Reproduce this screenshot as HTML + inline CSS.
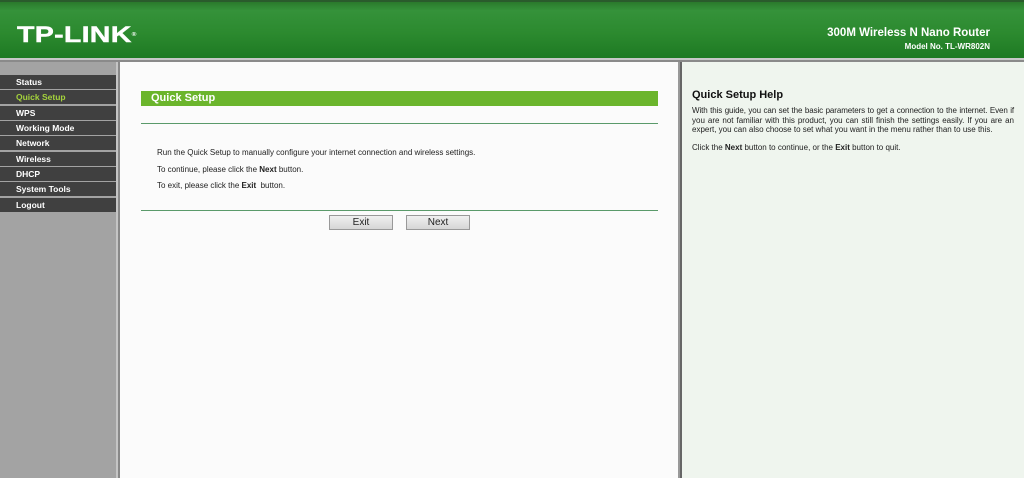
<!DOCTYPE html>
<html><head><style>
*{margin:0;padding:0;box-sizing:border-box}
body{width:1024px;height:478px;overflow:hidden;font-family:"Liberation Sans",Arial,sans-serif;background:#fff;position:relative}
#hd{position:absolute;left:0;top:0;width:1024px;height:58px;background:linear-gradient(#2a7a2c 0,#35923a 15%,#2c8a2f 55%,#1e7a23 100%);border-top:2px solid #2a5b2c}
#logo{position:absolute;left:17px;top:22px;color:#fff;font-weight:bold;font-size:22px;letter-spacing:0.2px;transform:scaleX(1.3);transform-origin:left;line-height:22px;white-space:nowrap;-webkit-text-stroke:0.4px #fff}
#logo sup{font-size:5px;vertical-align:top;-webkit-text-stroke:0}
#t1{position:absolute;right:34px;top:25px;color:#fff;font-weight:bold;font-size:11.5px}
#t2{position:absolute;right:34px;top:40px;color:#fff;font-weight:bold;font-size:8px}
#strip{position:absolute;left:0;top:58px;width:1024px;height:4px;background:linear-gradient(#c8c8c8 0,#c8c8c8 50%,#8a8a8a 50%)}
#side{position:absolute;left:0;top:62px;width:116px;height:416px;background:#a3a3a3}
#sdiv{position:absolute;left:116px;top:62px;width:4px;height:416px;background:linear-gradient(90deg,#c5c5c5 0,#c5c5c5 50%,#888 50%)}
.m{position:absolute;left:0;width:116px;height:14px;background:#404040;color:#fff;font-weight:bold;font-size:8.5px;line-height:14px;padding-left:16px}
#main{position:absolute;left:120px;top:62px;width:558px;height:416px;background:#fbfbfb}
#rdiv{position:absolute;left:678px;top:62px;width:4px;height:416px;background:linear-gradient(90deg,#999 0,#999 50%,#666 50%)}
#help{position:absolute;left:682px;top:62px;width:342px;height:416px;background:#eff5ee}
#bar{position:absolute;left:141px;top:91px;width:517px;height:15px;background:#6bb52c;color:#fff;font-weight:bold;font-size:11px;line-height:15px;padding-left:10px}
.hr{position:absolute;left:141px;width:517px;height:1px;background:#5a9a6a}
.p{position:absolute;left:157px;font-size:8px;color:#222}
.btn{position:absolute;top:215px;width:64px;height:15px;border:1px solid #999;background:linear-gradient(#f0f0f0,#d6d6d6);font-size:10px;text-align:center;line-height:13px;color:#222}
#hh{position:absolute;left:692px;top:89px;font-size:11px;font-weight:bold;color:#111}
.hp{position:absolute;left:692px;width:322px;font-size:8px;color:#222;line-height:9.5px;white-space:nowrap}
.j{text-align:justify;text-align-last:justify}
</style></head><body>
<div id="hd"><div id="logo">TP-LINK<sup>®</sup></div><div id="t1">300M Wireless N Nano Router</div><div id="t2">Model No. TL-WR802N</div></div>
<div id="strip"></div>
<div id="side">
<div class="m" style="top:13px">Status</div>
<div class="m" style="top:28px;color:#a4d23c">Quick Setup</div>
<div class="m" style="top:44px">WPS</div>
<div class="m" style="top:59px">Working Mode</div>
<div class="m" style="top:74px">Network</div>
<div class="m" style="top:90px">Wireless</div>
<div class="m" style="top:105px">DHCP</div>
<div class="m" style="top:120px">System Tools</div>
<div class="m" style="top:136px">Logout</div>
</div>
<div id="sdiv"></div>
<div id="main"></div>
<div id="rdiv"></div>
<div id="help"></div>
<div id="bar">Quick Setup</div>
<div class="hr" style="top:123px"></div>
<div class="p" style="top:148px">Run the Quick Setup to manually configure your internet connection and wireless settings.</div>
<div class="p" style="top:165px">To continue, please click the <b>Next</b> button.</div>
<div class="p" style="top:181px">To exit, please click the <b>Exit</b>&nbsp; button.</div>
<div class="hr" style="top:210px"></div>
<div class="btn" style="left:329px">Exit</div>
<div class="btn" style="left:406px">Next</div>
<div id="hh">Quick Setup Help</div>
<div class="hp j" style="top:106px;letter-spacing:-0.1px">With this guide, you can set the basic parameters to get a connection to the internet. Even if</div>
<div class="hp j" style="top:115.5px">you are not familiar with this product, you can still finish the settings easily. If you are an</div>
<div class="hp" style="top:125px">expert, you can also choose to set what you want in the menu rather than to use this.</div>
<div class="hp" style="top:143px">Click the <b>Next</b> button to continue, or the <b>Exit</b> button to quit.</div>
</body></html>
